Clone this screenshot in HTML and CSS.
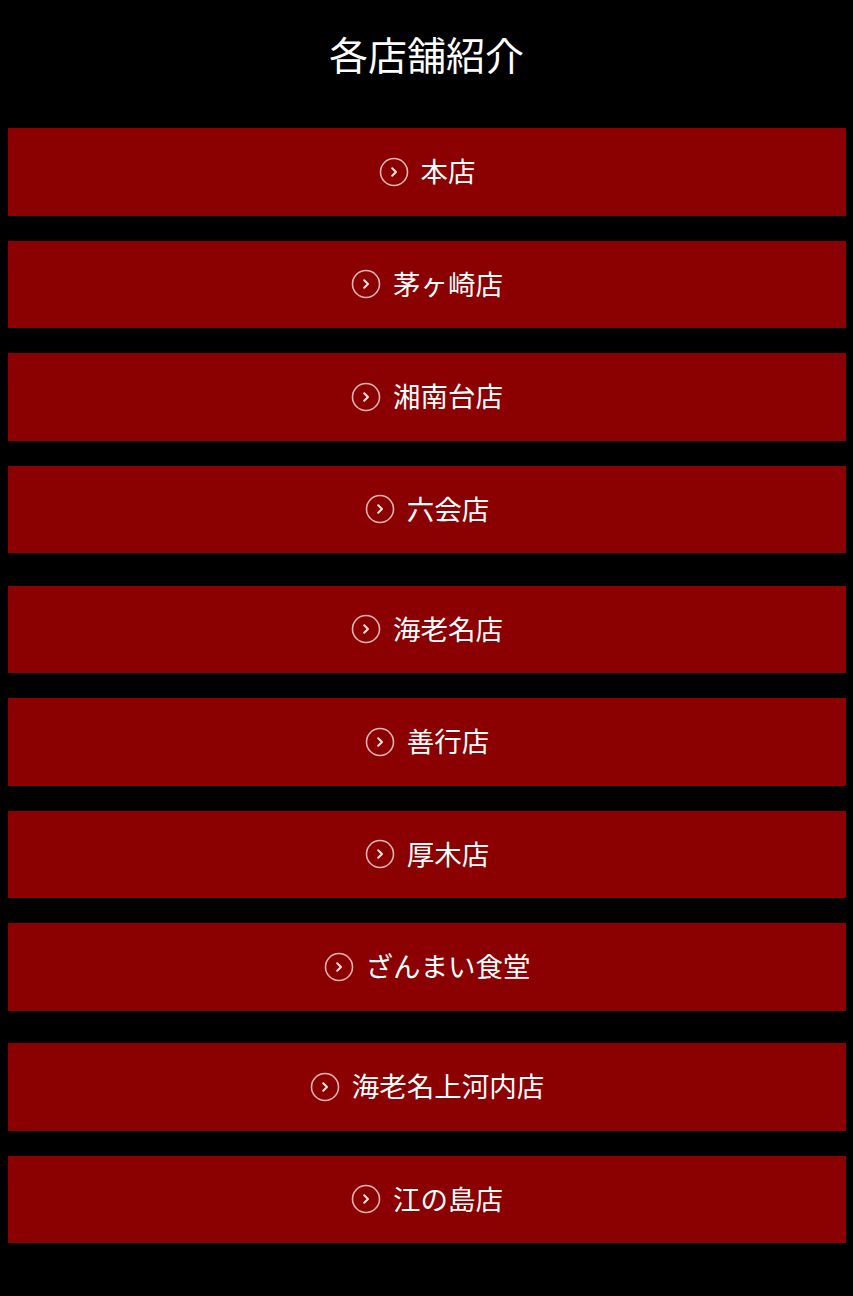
FILE: index.html
```html
<!DOCTYPE html>
<html lang="ja">
<head>
<meta charset="utf-8">
<title>各店舗紹介</title>
<link rel="stylesheet" href="styles.css">
</head>
<body>
<h1 class="title">各店舗紹介</h1>
<div class="groups">
  <ul class="group">
    <li><a class="shop" href="#"><svg class="ico" viewBox="0 0 30 30"><circle cx="15" cy="15" r="13.5"/><path d="M13.2 11.2 L17 15 L13.2 18.8"/></svg><span>本店</span></a></li>
    <li><a class="shop" href="#"><svg class="ico" viewBox="0 0 30 30"><circle cx="15" cy="15" r="13.5"/><path d="M13.2 11.2 L17 15 L13.2 18.8"/></svg><span>茅ヶ崎店</span></a></li>
    <li><a class="shop" href="#"><svg class="ico" viewBox="0 0 30 30"><circle cx="15" cy="15" r="13.5"/><path d="M13.2 11.2 L17 15 L13.2 18.8"/></svg><span>湘南台店</span></a></li>
    <li><a class="shop" href="#"><svg class="ico" viewBox="0 0 30 30"><circle cx="15" cy="15" r="13.5"/><path d="M13.2 11.2 L17 15 L13.2 18.8"/></svg><span>六会店</span></a></li>
  </ul>
  <ul class="group">
    <li><a class="shop" href="#"><svg class="ico" viewBox="0 0 30 30"><circle cx="15" cy="15" r="13.5"/><path d="M13.2 11.2 L17 15 L13.2 18.8"/></svg><span>海老名店</span></a></li>
    <li><a class="shop" href="#"><svg class="ico" viewBox="0 0 30 30"><circle cx="15" cy="15" r="13.5"/><path d="M13.2 11.2 L17 15 L13.2 18.8"/></svg><span>善行店</span></a></li>
    <li><a class="shop" href="#"><svg class="ico" viewBox="0 0 30 30"><circle cx="15" cy="15" r="13.5"/><path d="M13.2 11.2 L17 15 L13.2 18.8"/></svg><span>厚木店</span></a></li>
    <li><a class="shop" href="#"><svg class="ico" viewBox="0 0 30 30"><circle cx="15" cy="15" r="13.5"/><path d="M13.2 11.2 L17 15 L13.2 18.8"/></svg><span>ざんまい食堂</span></a></li>
  </ul>
  <ul class="group">
    <li><a class="shop" href="#"><svg class="ico" viewBox="0 0 30 30"><circle cx="15" cy="15" r="13.5"/><path d="M13.2 11.2 L17 15 L13.2 18.8"/></svg><span>海老名上河内店</span></a></li>
    <li><a class="shop" href="#"><svg class="ico" viewBox="0 0 30 30"><circle cx="15" cy="15" r="13.5"/><path d="M13.2 11.2 L17 15 L13.2 18.8"/></svg><span>江の島店</span></a></li>
  </ul>
</div>
</body>
</html>
```

FILE: styles.css
```css
html, body {
  margin: 0;
  padding: 0;
  background: #000;
}
body {
  font-family: "Noto Sans CJK JP", "Noto Sans", sans-serif;
  color: #fff;
  min-height: 1296px;
}
.title {
  margin: 0;
  padding-top: 23px;
  height: 60px;
  line-height: 60px;
  font-size: 39px;
  font-weight: 400;
  text-align: center;
  margin-bottom: 45px;
}
.groups {
  display: flex;
  flex-direction: column;
  gap: 32.5px;
  padding: 0 7px 0 8px;
}
.group {
  list-style: none;
  margin: 0;
  padding: 0;
  display: flex;
  flex-direction: column;
  gap: 25px;
}
.shop {
  display: flex;
  align-items: center;
  justify-content: center;
  gap: 12px;
  height: 87.5px;
  background: #8b0000;
  color: #fff;
  text-decoration: none;
  font-size: 27.5px;
  line-height: 1;
}
.shop span {
  position: relative;
  top: -1px;
}
.ico {
  width: 30px;
  height: 30px;
  fill: none;
  stroke: rgba(255, 225, 225, 0.8);
  stroke-width: 1.6;
  stroke-linecap: round;
  stroke-linejoin: round;
}
.ico path {
  stroke: rgba(255, 240, 240, 0.95);
  stroke-width: 2;
}
```
